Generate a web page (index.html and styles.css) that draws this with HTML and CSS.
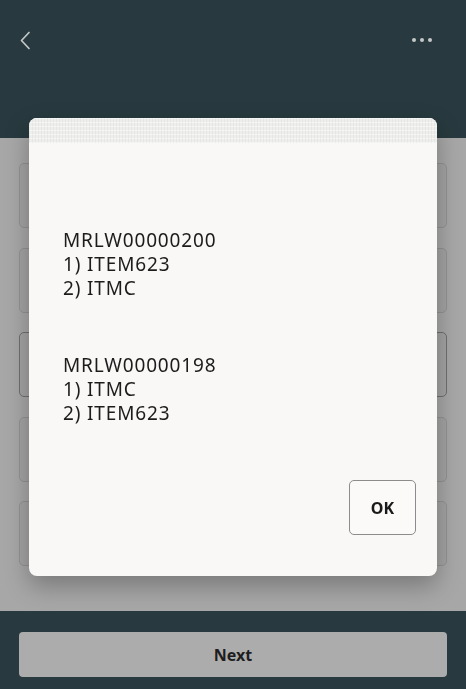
FILE: index.html
```html
<!DOCTYPE html>
<html lang="en">
<head>
<meta charset="utf-8">
<title>Messages</title>
<link rel="stylesheet" href="styles.css">
</head>
<body>
<div class="app">
  <header class="header">
    <div class="toolbar">
      <button class="icon-btn back" aria-label="Back">
        <svg width="12" height="19" viewBox="0 0 12 19"><path d="M10 1.5 L2.5 9.5 L10 17.5" fill="none" stroke="#c4c8c9" stroke-width="1.7" stroke-linecap="round" stroke-linejoin="round"/></svg>
      </button>
      <button class="icon-btn more" aria-label="More">
        <span class="dot"></span><span class="dot"></span><span class="dot"></span>
      </button>
    </div>
  </header>
  <main class="content">
    <div class="field"></div>
    <div class="field"></div>
    <div class="field focused"></div>
    <div class="field"></div>
    <div class="field"></div>
  </main>
  <footer class="footer">
    <button class="next-btn">Next</button>
  </footer>
</div>

<div class="dialog" role="dialog">
  <div class="dialog-top"></div>
  <div class="dialog-body">
    <p class="msg">MRLW00000200<br>1) ITEM623<br>2) ITMC</p>
    <p class="msg">MRLW00000198<br>1) ITMC<br>2) ITEM623</p>
  </div>
  <div class="dialog-actions">
    <button class="ok-btn">OK</button>
  </div>
</div>
</body>
</html>
```

FILE: styles.css
```css
* { box-sizing: border-box; }
html, body {
  margin: 0;
  padding: 0;
  width: 466px;
  height: 689px;
  overflow: hidden;
  font-family: "Noto Sans", "Open Sans", sans-serif;
}
.app {
  display: flex;
  flex-direction: column;
  height: 689px;
}
.header {
  height: 138px;
  background: #283a3f;
  padding: 28px 34px 0 16px;
}
.toolbar {
  display: flex;
  justify-content: space-between;
  align-items: center;
  height: 24px;
}
.icon-btn {
  background: none;
  border: 0;
  padding: 0;
  display: flex;
  align-items: center;
  gap: 4px;
  cursor: pointer;
}
.back { padding-left: 3px; }
.dot {
  width: 4px;
  height: 4px;
  border-radius: 50%;
  background: #c4c8c9;
}
.content {
  flex: 1;
  background: #a7a7a7;
  padding: 25px 19px 0 19px;
  display: flex;
  flex-direction: column;
  gap: 19.5px;
}
.field {
  height: 65px;
  border: 1px solid #929292;
  border-radius: 5px;
  background: #a3a3a3;
}
.field.focused {
  border-color: #6f6f6f;
}
.footer {
  height: 78px;
  background: #283a3f;
  padding: 21px 19px 0 19px;
}
.next-btn {
  width: 100%;
  height: 45px;
  border: 0;
  border-radius: 4px;
  background: #acacac;
  color: #1e1e1e;
  font-family: "Noto Sans", sans-serif;
  font-weight: 700;
  font-size: 16px;
}
.dialog {
  position: fixed;
  left: 29px;
  top: 118px;
  width: 408px;
  height: 458px;
  background: #f9f8f6;
  border-radius: 8px;
  box-shadow: 0 10px 24px rgba(0,0,0,0.28);
  display: flex;
  flex-direction: column;
  overflow: hidden;
}
.dialog-top {
  height: 25px;
  background-color: #eeeeed;
  background-image:
    repeating-linear-gradient(90deg, rgba(0,0,0,0.035) 0 1px, transparent 1px 3px),
    repeating-linear-gradient(0deg, rgba(255,255,255,0.5) 0 1px, transparent 1px 4px);
}
.dialog-body {
  flex: 1;
  padding: 85px 34px 0 34px;
  color: #1c1c1c;
}
.msg {
  margin: 0 0 53px 0;
  font-size: 19px;
  line-height: 24px;
  letter-spacing: 0.85px;
}
.dialog-actions {
  display: flex;
  justify-content: flex-end;
  padding: 0 21px 41px 0;
}
.ok-btn {
  width: 67px;
  height: 55px;
  background: #fbfaf8;
  border: 1px solid #8c8c8c;
  border-radius: 5px;
  font-family: "Noto Sans", sans-serif;
  font-weight: 700;
  font-size: 16px;
  color: #1a1a1a;
}
```
